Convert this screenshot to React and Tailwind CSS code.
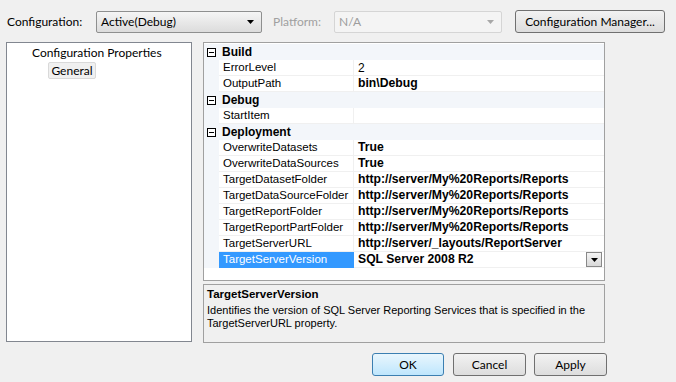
import React from "react";

const ui = { fontFamily: 'Lato, "Open Sans", sans-serif' };
const tahoma = { fontFamily: '"Liberation Sans", Arial, sans-serif' };

const groups = [
  {
    name: "Build",
    rows: [
      ["ErrorLevel", "2", false],
      ["OutputPath", "bin\\Debug", true],
    ],
  },
  { name: "Debug", rows: [["StartItem", "", false]] },
  {
    name: "Deployment",
    rows: [
      ["OverwriteDatasets", "True", true],
      ["OverwriteDataSources", "True", true],
      ["TargetDatasetFolder", "http://server/My%20Reports/Reports", true],
      ["TargetDataSourceFolder", "http://server/My%20Reports/Reports", true],
      ["TargetReportFolder", "http://server/My%20Reports/Reports", true],
      ["TargetReportPartFolder", "http://server/My%20Reports/Reports", true],
      ["TargetServerURL", "http://server/_layouts/ReportServer", true],
      ["TargetServerVersion", "SQL Server 2008 R2", true, "sel"],
    ],
  },
];

function Arrow({ color = "#000" }) {
  return (
    <svg width="7" height="4" viewBox="0 0 7 4">
      <path d="M0 0h7L3.5 4z" fill={color} />
    </svg>
  );
}

function Combo({ value, disabled, className }) {
  return (
    <div
      className={`h-[22px] flex items-center justify-between pl-1 pr-[7px] rounded-[2px] border ${
        disabled
          ? "border-[#d5d5d5] bg-[#f4f4f4] text-[#9d9d9d]"
          : "border-[#8e8f8f] bg-gradient-to-b from-[#f5f5f5] to-[#dcdcdc] text-black"
      } ${className}`}
    >
      <span className="text-[12px]">{value}</span>
      <Arrow color={disabled ? "#a8a8a8" : "#000"} />
    </div>
  );
}

function Btn({ children, className = "", primary }) {
  return (
    <div
      className={`h-[23px] flex items-center justify-center rounded-[3px] border text-[12px] ${
        primary
          ? "border-[#3c7fb1] bg-gradient-to-b from-[#e9f6fd] to-[#bee6fd]"
          : "border-[#707070] bg-gradient-to-b from-[#f2f2f2] to-[#dddddd]"
      } ${className}`}
    >
      {children}
    </div>
  );
}

function Minus() {
  return (
    <div className="w-[9px] h-[9px] border border-[#000] bg-white flex items-center justify-center">
      <div className="w-[5px] h-px bg-black" />
    </div>
  );
}

export default function App() {
  return (
    <div className="w-[676px] h-[382px] bg-[#f0f0f0] overflow-hidden text-black" style={ui}>
      <div className="flex items-center h-[42px] pt-[1px]">
        <span className="ml-[7px] w-[89px] text-[12px]">Configuration:</span>
        <Combo value="Active(Debug)" className="w-[166px]" />
        <span className="ml-[11px] w-[61px] text-[12px] text-[#a0a0a0]">Platform:</span>
        <Combo value="N/A" disabled className="w-[168px]" />
        <Btn className="ml-[13px] w-[150px]">Configuration Manager...</Btn>
      </div>

      <div className="flex ml-[6px]">
        <div className="w-[186px] h-[300px] bg-white border border-[#828790] pt-[2px]">
          <div className="text-[12px] pl-[25px] leading-[16px]">Configuration Properties</div>
          <div className="ml-[41px] mt-[1px] w-[48px] h-[17px] rounded-[2px] border border-[#d9d9d9] bg-[#f0f0f0] text-[12px] flex items-center justify-center">
            General
          </div>
        </div>

        <div className="ml-[11px] w-[402px] flex flex-col">
          <div className="h-[239px] bg-white border border-[#a0a0a0] pt-[1px] text-[11.5px]" style={tahoma}>
            {groups.map((g) => (
              <div key={g.name}>
                <div className="h-[16px] flex items-center bg-[#f3f6fa]">
                  <div className="w-[15px] flex justify-center">
                    <Minus />
                  </div>
                  <span className="ml-[3px] font-bold text-[12px]">{g.name}</span>
                </div>
                {g.rows.map(([k, v, bold, sel]) => (
                  <div key={k} className="h-[16px] flex bg-[#f3f6fa]">
                    <div className="w-[15px]" />
                    <div
                      className={`w-[135px] pl-[4px] flex items-center border-b border-r ${
                        sel ? "bg-[#3399ff] text-white border-[#3399ff]" : "bg-white border-[#f0f0f0]"
                      }`}
                    >
                      {k}
                    </div>
                    <div
                      className={`flex-1 pl-[4px] flex items-center justify-between bg-white border-b border-[#f0f0f0] ${
                        bold ? "font-bold text-[12.2px]" : "text-[12px]"
                      }`}
                    >
                      <span>{v}</span>
                      {sel && (
                        <div className="mr-[2px] w-[16px] h-[15px] border border-[#888] bg-gradient-to-b from-[#f4f4f4] to-[#d8d8d8] flex items-center justify-center">
                          <Arrow />
                        </div>
                      )}
                    </div>
                  </div>
                ))}
              </div>
            ))}
          </div>

          <div className="mt-[3px] h-[59px] border border-[#a0a0a0] bg-[#f0f0f0] px-[3px] pt-[1px] text-[11px] leading-[13px] whitespace-nowrap" style={tahoma}>
            <div className="font-bold text-[11.5px] leading-[16px]">TargetServerVersion</div>
            <div className="mt-[2px]">Identifies the version of SQL Server Reporting Services that is specified in the</div>
            <div>TargetServerURL property.</div>
          </div>
        </div>
      </div>

      <div className="flex mt-[10px] ml-[372px]">
        <Btn primary className="w-[72px]">OK</Btn>
        <Btn className="ml-[9px] w-[73px]">Cancel</Btn>
        <Btn className="ml-[8px] w-[73px]">Apply</Btn>
      </div>
    </div>
  );
}
